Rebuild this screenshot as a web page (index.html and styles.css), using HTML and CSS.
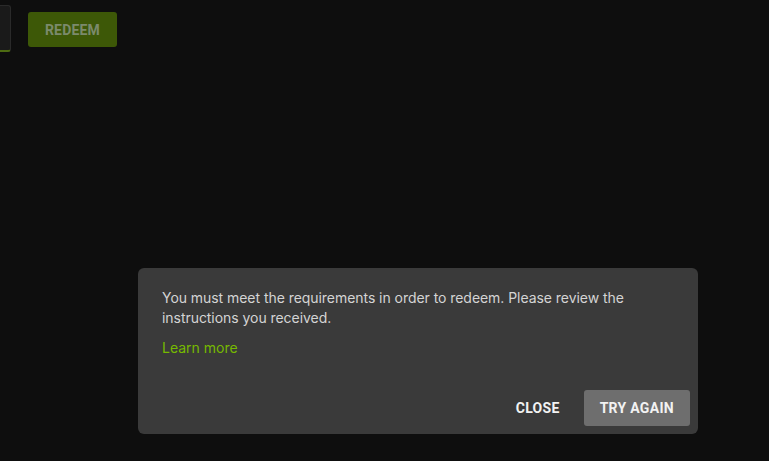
FILE: index.html
```html
<!DOCTYPE html>
<html>
<head>
<meta charset="utf-8">
<link rel="stylesheet" href="styles.css">
</head>
<body>
<div class="top">
  <div class="field"></div>
  <button class="redeem">REDEEM</button>
</div>
<div class="dialog">
  <p class="msg">You must meet the requirements in order to redeem. Please review the instructions you received.</p>
  <a class="learn">Learn more</a>
  <div class="actions">
    <button class="close">CLOSE</button>
    <button class="retry">TRY AGAIN</button>
  </div>
</div>
</body>
</html>
```
FILE: styles.css
```css
html, body {
  margin: 0;
  padding: 0;
  background: #0e0e0e;
  width: 769px;
  height: 461px;
  overflow: hidden;
  font-family: Inter, "Liberation Sans", sans-serif;
}
.top {
  display: flex;
  align-items: flex-start;
  padding-top: 5px;
  gap: 17px;
}
.field {
  width: 11px;
  height: 47px;
  background: #1a1a1a;
  border: 1px solid #2a2a2a;
  border-left: none;
  border-bottom: 2px solid #4d6b12;
  border-radius: 0 3px 3px 0;
  box-sizing: border-box;
}
.redeem {
  margin-top: 7px;
  width: 89px;
  height: 35px;
  background: #3d5807;
  border: none;
  border-radius: 3px;
  color: #7b8a6c;
  font-family: Roboto, sans-serif;
  font-weight: 700;
  font-size: 14px;
  letter-spacing: 0.2px;
}
.dialog {
  position: absolute;
  left: 138px;
  top: 268px;
  width: 560px;
  height: 166px;
  box-sizing: border-box;
  background: #3a3a3a;
  border-radius: 6px;
  padding: 20px 8px 8px 24px;
  display: flex;
  flex-direction: column;
}
.msg {
  margin: 0;
  width: 480px;
  color: #d4d4d4;
  font-size: 14px;
  line-height: 20px;
  letter-spacing: -0.05px;
}
.learn {
  margin-top: 10px;
  color: #76b900;
  font-size: 14px;
  line-height: 20px;
}
.actions {
  margin-top: auto;
  display: flex;
  justify-content: flex-end;
  align-items: center;
  gap: 8px;
}
.actions button {
  height: 36px;
  border: none;
  border-radius: 3px;
  font-family: Roboto, sans-serif;
  font-weight: 700;
  font-size: 14px;
  letter-spacing: 0.3px;
  color: #f2f2f2;
  padding: 0 16px;
  white-space: nowrap;
}
.close {
  background: transparent;
}
.retry {
  background: #6e6e6e;
}
```
